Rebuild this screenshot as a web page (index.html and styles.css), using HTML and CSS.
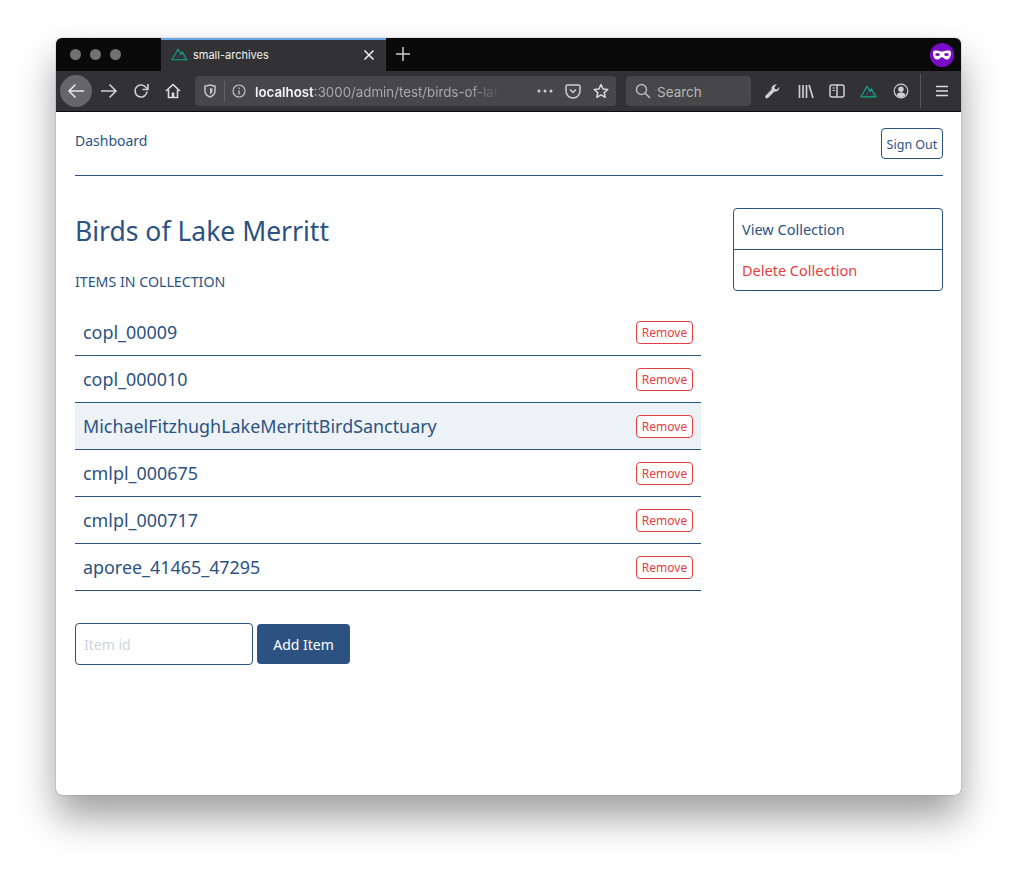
FILE: index.html
```html
<!DOCTYPE html>
<html lang="en">
<head>
    <meta charset="UTF-8">
    <title>small-archives</title>
    <link rel="stylesheet" href="styles.css">
</head>
<body>
    <div class="window">
        <div class="tabbar">
            <div class="lights"><span></span><span></span><span></span></div>
            <div class="tab">
                <svg class="tab-icon" width="17" height="13" viewBox="0 0 17 13" fill="none">
                    <path d="M6.500 9.500 10.500 3.500 14 11.800H6Z" stroke="#2b4f6e" stroke-width="1.100" stroke-linejoin="round"/>
                    <path d="M1 11.800 7 1.200 10 6.300 11.500 4 16 11.800Z" stroke="#16a37f" stroke-width="1.100" stroke-linejoin="round"/>
                </svg>
                <span class="tab-title">small-archives</span>
                <svg class="tab-close" width="12" height="12" viewBox="0 0 12 12"><path d="M1.500 1.500 10.500 10.500M10.500 1.500 1.500 10.500" stroke="#f2f2f2" stroke-width="1.500"/></svg>
            </div>
            <svg class="new-tab" width="16" height="16" viewBox="0 0 16 16"><path d="M8 1V15M1 8H15" stroke="#cfcfcf" stroke-width="1.500"/></svg>
            <div class="mask">
                <svg width="20" height="10" viewBox="0 0 20 10"><path d="M1 2.400C1 1 2.400.5 4 .5 6.500.5 8.500 1.600 10 1.600S13.500.5 16 .5C17.600.5 19 1 19 2.400 19 6.500 17.500 9.500 14.500 9.500 12 9.500 11.500 7 10 7S8 9.500 5.500 9.500C2.500 9.500 1 6.500 1 2.400Z" fill="#fff"/><ellipse cx="5.500" cy="4.500" rx="2.300" ry="1.500" fill="#7a0cc9"/><ellipse cx="14.500" cy="4.500" rx="2.300" ry="1.500" fill="#7a0cc9"/></svg>
            </div>
        </div>
        <div class="toolbar">
            <div class="back">
                <svg width="18" height="16" viewBox="0 0 18 16" fill="none"><path d="M17 8H2M8.500 1.500 2 8l6.500 6.500" stroke="#e6e6e6" stroke-width="1.600"/></svg>
            </div>
            <svg class="tool forward" width="18" height="16" viewBox="0 0 18 16" fill="none"><path d="M1 8H16M9.500 1.500 16 8l-6.500 6.500" stroke="#cfcfcf" stroke-width="1.600"/></svg>
            <svg class="tool reload" width="16" height="16" viewBox="0 0 16 16" fill="none"><path d="M14 8.500A6 6 0 1 1 12.200 3.700L14.500 6" stroke="#cfcfcf" stroke-width="1.600"/><path d="M15 1V6.500H9.500" fill="none" stroke="#cfcfcf" stroke-width="1.600"/></svg>
            <svg class="tool home" width="16" height="16" viewBox="0 0 16 16" fill="none"><path d="M1 8 8 1.500 15 8" stroke="#dcdcdc" stroke-width="1.700" stroke-linejoin="round"/><path d="M3.500 6.500V14.500H12.500V6.500" stroke="#dcdcdc" stroke-width="1.600"/><rect x="6.700" y="9.500" width="2.600" height="5" fill="#dcdcdc"/></svg>
            <div class="urlbar">
                <svg class="shield" width="14" height="14" viewBox="0 0 14 14" fill="none"><path d="M2 2.200 7 1l5 1.200V7c0 3-2.500 5-5 6-2.500-1-5-3-5-6Z" stroke="#c4c4c4" stroke-width="1.500"/><path d="M7 4 9.500 4.600V7c0 1.500-1.200 2.600-2.500 3.200Z" fill="#c4c4c4"/></svg>
                <span class="url-sep"></span>
                <svg class="info" width="14" height="14" viewBox="0 0 14 14" fill="none"><circle cx="7" cy="7" r="6" stroke="#c4c4c4" stroke-width="1.200"/><path d="M7 6.200V10.500M7 3.500V5" stroke="#c4c4c4" stroke-width="1.300"/></svg>
                <div class="url"><b>localhost</b>:3000/admin/test/birds-of-lak</div>
                <svg class="dots" width="16" height="4" viewBox="0 0 16 4"><circle cx="2" cy="2" r="1.500" fill="#cfcfcf"/><circle cx="8" cy="2" r="1.500" fill="#cfcfcf"/><circle cx="14" cy="2" r="1.500" fill="#cfcfcf"/></svg>
                <svg class="pocket" width="16" height="15" viewBox="0 0 16 15" fill="none"><path d="M1 2.500C1 1.600 1.600 1 2.500 1h11c.900 0 1.500.600 1.500 1.500V7a7 7 0 0 1-14 0Z" stroke="#cfcfcf" stroke-width="1.500"/><path d="M5 5.500 8 8.500l3-3" stroke="#cfcfcf" stroke-width="1.500"/></svg>
                <svg class="star" width="16" height="16" viewBox="0 0 16 16" fill="none"><path d="M8 1.500 10 5.900l4.800.500-3.600 3.200 1 4.700L8 11.900l-4.200 2.400 1-4.700L1.200 6.400 6 5.900Z" stroke="#d8d8d8" stroke-width="1.500" stroke-linejoin="round"/></svg>
            </div>
            <div class="searchbar">
                <svg width="16" height="16" viewBox="0 0 16 16" fill="none"><circle cx="6.500" cy="6.500" r="5" stroke="#b8b8b8" stroke-width="1.500"/><path d="M10 10 15 15" stroke="#b8b8b8" stroke-width="1.700"/></svg>
                <span class="search-label">Search</span>
            </div>
            <svg class="tool wrench" width="16" height="16" viewBox="0 0 16 16"><path d="M1.200 13 7.600 6.600C7 4.200 8.800 1.500 12 1.500l.800.100-2.300 2.300.400 2.100 2.100.400 2.300-2.300c.4 3-2 5.200-4.800 4.500L4 15a1.800 1.800 0 0 1-2.800-2Z" fill="#cfcfcf"/></svg>
            <svg class="tool library" width="16" height="15" viewBox="0 0 16 15" fill="none"><path d="M1.500 1V14M5 1V14M8.500 1V14M11 1 15 14" stroke="#cfcfcf" stroke-width="1.700"/></svg>
            <svg class="tool sidebar" width="16" height="14" viewBox="0 0 16 14" fill="none"><rect x="1" y="1" width="14" height="12" rx="2" stroke="#cfcfcf" stroke-width="1.500"/><path d="M8 1V13" stroke="#cfcfcf" stroke-width="1.500"/><path d="M3.500 4H6M3.500 6.500H6" stroke="#cfcfcf" stroke-width="1.100"/></svg>
            <svg class="tool nuxt" width="17" height="13" viewBox="0 0 17 13" fill="none"><path d="M6.500 9.500 10.500 3.500 14 11.800H6Z" stroke="#2b4f6e" stroke-width="1.200" stroke-linejoin="round"/><path d="M1 11.800 7 1.200 10 6.300 11.500 4 16 11.800Z" stroke="#12a57e" stroke-width="1.200" stroke-linejoin="round"/></svg>
            <svg class="tool account" width="16" height="16" viewBox="0 0 16 16" fill="none"><circle cx="8" cy="8" r="6.800" stroke="#cfcfcf" stroke-width="1.200"/><circle cx="8" cy="6.200" r="2.700" fill="#cfcfcf"/><path d="M3.500 12C4.500 10 6 9.500 8 9.500s3.500.5 4.500 2.500C11.500 13.500 10 14 8 14s-3.500-.5-4.500-2Z" fill="#cfcfcf"/></svg>
            <span class="tool-sep"></span>
            <svg class="tool menu" width="12" height="12" viewBox="0 0 12 12"><path d="M0 1.500H12M0 6H12M0 10.500H12" stroke="#dcdcdc" stroke-width="1.500"/></svg>
        </div>

        <div class="page">
            <header class="topnav">
                <a class="nav-link">Dashboard</a>
                <button class="btn-signout">Sign Out</button>
            </header>
            <div class="columns">
                <main class="main">
                    <h1>Birds of Lake Merritt</h1>
                    <h2>ITEMS IN COLLECTION</h2>
                    <ul class="items">
                        <li><span>copl_00009</span><button class="btn-remove">Remove</button></li>
                        <li><span>copl_000010</span><button class="btn-remove">Remove</button></li>
                        <li class="active"><span>MichaelFitzhughLakeMerrittBirdSanctuary</span><button class="btn-remove">Remove</button></li>
                        <li><span>cmlpl_000675</span><button class="btn-remove">Remove</button></li>
                        <li><span>cmlpl_000717</span><button class="btn-remove">Remove</button></li>
                        <li><span>aporee_41465_47295</span><button class="btn-remove">Remove</button></li>
                    </ul>
                    <form class="add-form">
                        <input type="text" placeholder="Item id">
                        <button type="button" class="btn-add">Add Item</button>
                    </form>
                </main>
                <aside class="side">
                    <a>View Collection</a>
                    <a class="danger">Delete Collection</a>
                </aside>
            </div>
        </div>
    </div>
</body>
</html>
```

FILE: styles.css
```css
html, body {
    margin: 0;
    background: #fff;
}
body {
    padding: 38px 56px 0;
    height: 869px;
    box-sizing: border-box;
    overflow: hidden;
    font-family: "Noto Sans", Arial, sans-serif;
    color: #2c5282;
}
.window {
    width: 905px;
    height: 757px;
    border-radius: 6px;
    overflow: hidden;
    background: #fff;
    box-shadow: 0 0 1px rgba(0,0,0,0.7), 0 22px 38px rgba(0,0,0,0.38);
    display: flex;
    flex-direction: column;
}

/* browser chrome */
.tabbar {
    height: 33px;
    flex: none;
    background: #0a0a0b;
    display: flex;
    align-items: center;
}
.lights {
    display: flex;
    gap: 9px;
    width: 105px;
    padding-left: 14px;
    box-sizing: border-box;
}
.lights span {
    width: 11px;
    height: 11px;
    border-radius: 50%;
    background: #727272;
}
.tab {
    width: 225px;
    height: 33px;
    box-sizing: border-box;
    background: #323234;
    border-top: 2px solid #6aa5e8;
    display: flex;
    align-items: center;
    padding: 0 11px 2px 10px;
}
.tab-icon { margin-right: 5px; }
.tab-title {
    flex: 1;
    font: 11px Inter, Arial, sans-serif;
    color: #f0f0f0;
}
.new-tab { margin: 0 0 2px 9px; }
.mask {
    margin-left: auto;
    margin-right: 7px;
    width: 24px;
    height: 24px;
    border-radius: 50%;
    background: #7a0cc9;
    display: flex;
    align-items: center;
    justify-content: center;
}
.toolbar {
    height: 41px;
    flex: none;
    box-sizing: border-box;
    background: #323234;
    border-bottom: 1px solid #0c0c0c;
    display: flex;
    align-items: center;
    padding-left: 4px;
}
.back {
    width: 32px;
    height: 32px;
    border-radius: 50%;
    background: #666668;
    display: flex;
    align-items: center;
    justify-content: center;
}
.tool { flex: none; }
.forward { margin-left: 8px; }
.reload { margin-left: 15px; }
.home { margin-left: 16px; }
.urlbar {
    width: 421px;
    height: 30px;
    margin-left: 14px;
    box-sizing: border-box;
    background: #474749;
    border-radius: 4px;
    display: flex;
    align-items: center;
    padding-left: 8px;
}
.url-sep {
    width: 1px;
    height: 20px;
    background: #5f6266;
    margin: 0 7px 0 7px;
}
.url {
    width: 245px;
    margin-left: 9px;
    padding-top: 1px;
    white-space: nowrap;
    font: 13.3px Inter, Arial, sans-serif;
    color: #a9a9aa;
    -webkit-mask-image: linear-gradient(to right, #000 215px, transparent 245px);
    mask-image: linear-gradient(to right, #000 215px, transparent 245px);
}
.url b {
    font-weight: 600;
    color: #f4f4f4;
}
.dots { margin-left: 37px; }
.pocket { margin-left: 12px; }
.star { margin-left: 12px; }
.searchbar {
    width: 125px;
    height: 30px;
    margin-left: 10px;
    box-sizing: border-box;
    background: #474749;
    border-radius: 4px;
    display: flex;
    align-items: center;
    gap: 6px;
    padding-left: 9px;
    font: 13.500px Inter, Arial, sans-serif;
    color: #b8b8b8;
}
.search-label { padding-top: 1px; }
.wrench { margin-left: 13px; }
.library { margin-left: 18px; }
.sidebar { margin-left: 15px; }
.nuxt { margin-left: 15px; }
.account { margin-left: 16px; }
.tool-sep {
    width: 1px;
    height: 34px;
    background: #58585a;
    margin-left: 11px;
}
.menu { margin-left: 15px; }

/* page */
.page {
    flex: 1;
    padding: 16px 18px 0 19px;
}
.topnav {
    display: flex;
    justify-content: space-between;
    align-items: flex-start;
    height: 47px;
    border-bottom: 1px solid #2c5282;
}
.nav-link {
    font-size: 14px;
    line-height: 24px;
    padding-top: 1px;
}
button {
    font-family: inherit;
    background: #fff;
    cursor: pointer;
}
.btn-signout {
    width: 62px;
    height: 31px;
    padding: 2px 0 0;
    border: 1px solid #2c5282;
    border-radius: 4px;
    color: #2c5282;
    font-size: 12.500px;
}
.columns {
    display: flex;
    gap: 32px;
    align-items: flex-start;
    margin-top: 32px;
}
.main { width: 626px; }
h1 {
    margin: 0;
    font-size: 26.500px;
    font-weight: 400;
    line-height: 46px;
}
h2 {
    margin: 16px 0 0;
    font-size: 14.200px;
    font-weight: 400;
    line-height: 24px;
}
.items {
    list-style: none;
    margin: 15px 0 0;
    padding: 0;
}
.items li {
    height: 47px;
    box-sizing: border-box;
    border-bottom: 1px solid #2c5282;
    display: flex;
    align-items: center;
    justify-content: space-between;
    padding: 0 8px;
    font-size: 17.900px;
}
.items li.active { background: #edf2f7; }
.btn-remove {
    width: 57px;
    height: 23px;
    padding: 0;
    border: 1px solid #e53e3e;
    border-radius: 4px;
    color: #e53e3e;
    font-size: 12px;
}
.add-form {
    display: flex;
    align-items: center;
    gap: 4px;
    margin-top: 32px;
}
.add-form input {
    width: 178px;
    height: 42px;
    box-sizing: border-box;
    padding: 0 8px;
    border: 1px solid #2c5282;
    border-radius: 4px;
    font: 14px "Noto Sans", Arial, sans-serif;
    color: #2c5282;
}
.add-form input::placeholder { color: #cbd5e0; }
.btn-add {
    width: 93px;
    height: 40px;
    padding: 0;
    border: none;
    border-radius: 4px;
    background: #2c5282;
    color: #fff;
    font-size: 14px;
}
.side {
    width: 210px;
    box-sizing: border-box;
    border: 1px solid #2c5282;
    border-radius: 4px;
    display: flex;
    flex-direction: column;
}
.side a {
    height: 40px;
    box-sizing: border-box;
    padding: 0 8px;
    display: flex;
    align-items: center;
    font-size: 14.500px;
}
.side a + a {
    height: 41px;
    border-top: 1px solid #2c5282;
}
.side .danger { color: #e53e3e; }
```
